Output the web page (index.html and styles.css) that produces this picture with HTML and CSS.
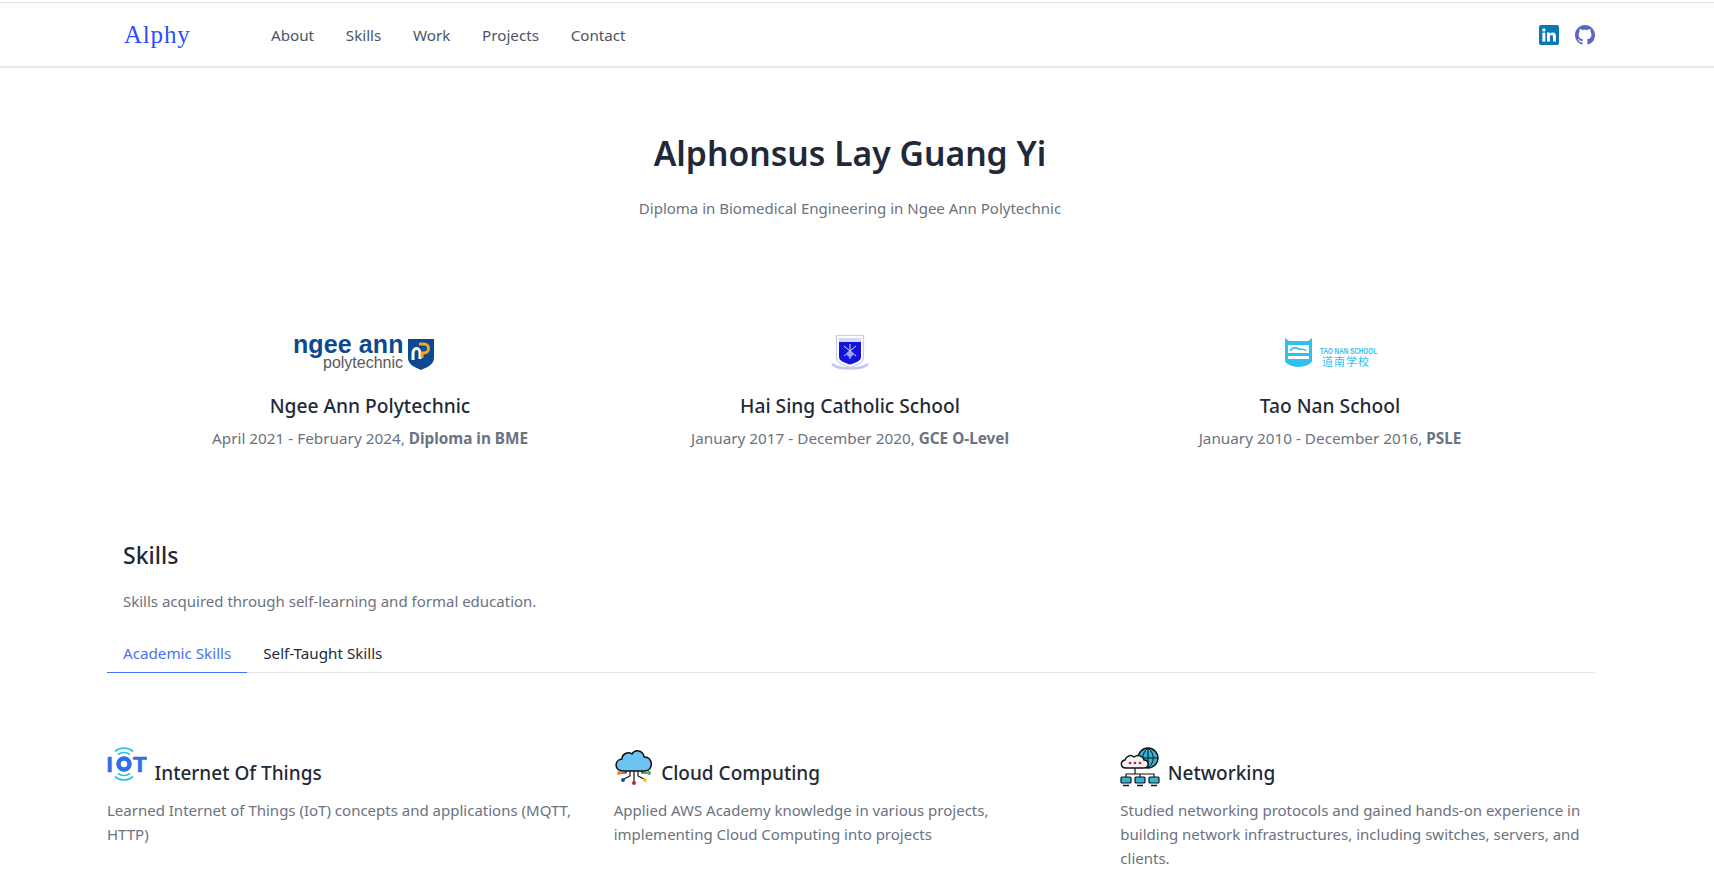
FILE: index.html
```html
<!DOCTYPE html>
<html lang="en">
<head>
<meta charset="utf-8">
<title>Alphy</title>
<link rel="stylesheet" href="styles.css">
</head>
<body>
<header class="topbar">
  <nav class="nav">
    <a class="brand" href="#">Alphy</a>
    <ul class="menu">
      <li><a href="#">About</a></li>
      <li><a href="#">Skills</a></li>
      <li><a href="#">Work</a></li>
      <li><a href="#">Projects</a></li>
      <li><a href="#">Contact</a></li>
    </ul>
    <div class="socials">
      <svg class="social" viewBox="0 0 20 20" aria-label="LinkedIn"><rect width="20" height="20" rx="2" fill="#0a78b5"/><rect x="3.4" y="7.6" width="2.9" height="9" fill="#fff"/><circle cx="4.85" cy="4.9" r="1.65" fill="#fff"/><path d="M8 7.6h2.8v1.3c.5-.9 1.6-1.5 2.9-1.5 2.4 0 3.2 1.5 3.2 4v5.2h-2.9v-4.6c0-1.2-.3-2.1-1.4-2.1-1.2 0-1.7.9-1.7 2.1v4.6H8z" fill="#fff"/></svg>
      <svg class="social" viewBox="0 0 16 16" aria-label="GitHub"><path fill="#5a67c8" d="M8 0C3.58 0 0 3.58 0 8c0 3.54 2.29 6.53 5.47 7.59.4.07.55-.17.55-.38 0-.19-.01-.82-.01-1.49-2.01.37-2.53-.49-2.69-.94-.09-.23-.48-.94-.82-1.13-.28-.15-.68-.52-.01-.53.63-.01 1.08.58 1.23.82.72 1.21 1.87.87 2.33.66.07-.52.28-.87.51-1.07-1.78-.2-3.64-.89-3.64-3.95 0-.87.31-1.59.82-2.15-.08-.2-.36-1.02.08-2.12 0 0 .67-.21 2.2.82.64-.18 1.32-.27 2-.27s1.36.09 2 .27c1.53-1.04 2.2-.82 2.2-.82.44 1.1.16 1.92.08 2.12.51.56.82 1.27.82 2.15 0 3.07-1.87 3.75-3.65 3.95.29.25.54.73.54 1.48 0 1.07-.01 1.93-.01 2.2 0 .21.15.46.55.38A8.01 8.01 0 0 0 16 8c0-4.42-3.58-8-8-8z"/></svg>
    </div>
  </nav>
</header>

<main class="page">
  <section class="hero">
    <h1 class="hero-title">Alphonsus Lay Guang Yi</h1>
    <p class="hero-sub">Diploma in Biomedical Engineering in Ngee Ann Polytechnic</p>
  </section>

  <section class="schools">
    <article class="school">
      <svg class="school-logo" viewBox="0 -4 160 44" aria-label="Ngee Ann Polytechnic">
        <text class="np-main" x="3" y="19">ngee ann</text>
        <text class="np-sub" x="33" y="34">polytechnic</text>
        <path d="M118 5h26v19c0 6-6 9-13 12-7-3-13-6-13-12z" fill="#0b4a8f"/>
        <path d="M123 26v-7c0-6 7-6 7 0v6" fill="none" stroke="#fff" stroke-width="3"/>
        <path d="M129 10h5c6 0 6 9 0 9h-2v5" fill="none" stroke="#f5a623" stroke-width="3"/>
      </svg>
      <h3 class="school-name">Ngee Ann Polytechnic</h3>
      <p class="school-info">April 2021 - February 2024, <strong>Diploma in BME</strong></p>
    </article>
    <article class="school">
      <svg class="school-logo" viewBox="0 -4 160 44" aria-label="Hai Sing Catholic School">
        <path d="M66.500 1.500h27v23c0 4-7 7-13.500 9-6.500-2-13.500-5-13.500-9z" fill="#fff" stroke="#c9cdf2" stroke-width="1.200"/>
        <rect x="69" y="4" width="22" height="4" fill="#d5d7f8"/>
        <path d="M69 8h22v15c0 4-6 6-11 7.500-5-1.500-11-3.500-11-7.500z" fill="#1414e0"/>
        <path d="M80 10v15M74 12l12 10M86 12l-12 10" stroke="#dfe0ff" stroke-width="1"/>
        <circle cx="80" cy="20" r="3" fill="#9fa3f5"/>
        <path d="M62 30c6 6 30 6 36 0" fill="none" stroke="#c4c8f0" stroke-width="2.500"/>
      </svg>
      <h3 class="school-name">Hai Sing Catholic School</h3>
      <p class="school-info">January 2017 - December 2020, <strong>GCE O-Level</strong></p>
    </article>
    <article class="school">
      <svg class="school-logo" viewBox="0 -4 160 44" aria-label="Tao Nan School">
        <path d="M35 4l4 3h19l4-3v23c0 3-7 5-13.500 7-6.500-2-13.500-4-13.500-7z" fill="#2fc0ee"/>
        <rect x="38" y="11" width="21" height="8" fill="#fff"/>
        <path d="M40 17c3-5 7-3 9-2s5-1 7 2" fill="none" stroke="#2fc0ee" stroke-width="1.500"/>
        <rect x="38" y="22" width="21" height="3" fill="#fff"/>
        <path d="M36 30c6 5 19 5 25 0" fill="none" stroke="#fff" stroke-width="1.500"/>
        <text class="tn-main" x="70" y="20" textLength="57" lengthAdjust="spacingAndGlyphs">TAO NAN SCHOOL</text>
        <text class="tn-sub" x="72" y="32">道南学校</text>
      </svg>
      <h3 class="school-name">Tao Nan School</h3>
      <p class="school-info">January 2010 - December 2016, <strong>PSLE</strong></p>
    </article>
  </section>

  <section class="skills">
    <h2 class="skills-title">Skills</h2>
    <p class="skills-desc">Skills acquired through self-learning and formal education.</p>
    <div class="tabs">
      <button class="tab tab-active">Academic Skills</button>
      <button class="tab">Self-Taught Skills</button>
    </div>
    <div class="skill-grid">
      <article class="skill">
        <h3 class="skill-head">
          <svg class="skill-icon" viewBox="0 0 40 40">
            <text class="iot-letter" x="-0.500" y="25">I</text>
            <circle cx="17" cy="17" r="5.500" fill="none" stroke="#2f6fe8" stroke-width="4.500"/>
            <text class="iot-letter" x="26" y="25">T</text>
            <path d="M8 4.500c5-4.500 13-4.500 18 0M11 7.500c3.500-2.500 8.500-2.500 12 0M8 29.500c5 4.500 13 4.500 18 0M11 26.500c3.500 2.500 8.500 2.500 12 0" fill="none" stroke="#2cc6dc" stroke-width="1.800"/>
          </svg>
          Internet Of Things
        </h3>
        <p class="skill-text">Learned Internet of Things (IoT) concepts and applications (MQTT, HTTP)</p>
      </article>
      <article class="skill">
        <h3 class="skill-head">
          <svg class="skill-icon" viewBox="0 0 40 40">
            <path d="M9 24c-9 0-9-11-1-12 0-5 6-8 10-5 3-5 11-4 12 3 9-1 10 14 1 14z" fill="#6cc4f2" stroke="#111" stroke-width="1.500" stroke-linejoin="round"/>
            <path d="M20 24v11M16 24v5l-6 3M24 24v5l6 3M12 24v2H7M28 24v2h5" fill="none" stroke="#111" stroke-width="1.200"/>
            <circle cx="20" cy="36" r="2" fill="#c8202a"/>
            <circle cx="9" cy="33" r="2" fill="#234a8f"/>
            <circle cx="31" cy="33" r="2" fill="#e8c52a"/>
            <circle cx="5" cy="26" r="2" fill="#e88a2a"/>
            <circle cx="35" cy="26" r="2" fill="#3fae6a"/>
          </svg>
          Cloud Computing
        </h3>
        <p class="skill-text">Applied AWS Academy knowledge in various projects, implementing Cloud Computing into projects</p>
      </article>
      <article class="skill">
        <h3 class="skill-head">
          <svg class="skill-icon" viewBox="0 0 40 40">
            <circle cx="28" cy="11" r="10" fill="#35b3d6" stroke="#111" stroke-width="1.400"/>
            <path d="M18 11h20M28 1v20M28 1c-7 6-7 14 0 20M28 1c7 6 7 14 0 20" fill="none" stroke="#111" stroke-width="1"/>
            <path d="M6 21c-6 0-6-7-1-8 1-4 6-6 9-3 4-3 9-1 10 3 5 0 6 8 0 8z" fill="#f1f1f1" stroke="#111" stroke-width="1.400"/>
            <circle cx="10" cy="16" r="1.300" fill="#c8202a"/><circle cx="15" cy="16" r="1.300" fill="#c8202a"/><circle cx="20" cy="16" r="1.300" fill="#c8202a"/>
            <path d="M15 21v6M6 30v-3h28v3M20 27v3" fill="none" stroke="#111" stroke-width="1.200"/>
            <rect x="1" y="30" width="10" height="6" rx="1" fill="#35b3d6" stroke="#111" stroke-width="1.200"/>
            <rect x="15" y="30" width="10" height="6" rx="1" fill="#35b3d6" stroke="#111" stroke-width="1.200"/>
            <rect x="29" y="30" width="10" height="6" rx="1" fill="#35b3d6" stroke="#111" stroke-width="1.200"/>
            <path d="M3 38.500h6M17 38.500h6M31 38.500h6" stroke="#111" stroke-width="1.400"/>
          </svg>
          Networking
        </h3>
        <p class="skill-text">Studied networking protocols and gained hands-on experience in building network infrastructures, including switches, servers, and clients.</p>
      </article>
    </div>
  </section>
</main>
</body>
</html>
```
FILE: styles.css
```css
* { box-sizing: border-box; }
html, body { margin: 0; padding: 0; height: 875px; overflow: hidden; }
body {
  background: #fff;
  color: #1f2937;
  font-family: "Noto Sans", sans-serif;
  font-size: 15px;
  line-height: 24px;
}
a { color: inherit; text-decoration: none; }
p, h1, h2, h3, ul { margin: 0; padding: 0; }

.topbar {
  margin-top: 2px;
  height: 66px;
  border-top: 1px solid #e2e3e6;
  border-bottom: 2px solid #e9eaec;
}
.nav {
  width: 1488px;
  margin-left: 107px;
  height: 63px;
  display: flex;
  align-items: center;
}
.brand {
  width: 164px;
  padding-left: 17px;
  color: #2b4dff;
  font-family: "Liberation Serif", serif;
  font-size: 25px;
  letter-spacing: 0.8px;
}
.menu { list-style: none; display: flex; gap: 31.700px; color: #4b5563; font-size: 15.200px; }
.socials { margin-left: auto; display: flex; gap: 16px; align-items: center; }
.social { width: 20px; height: 20px; display: block; }

.page { width: 1700px; }
.hero { padding-top: 61px; text-align: center; }
.hero-title { font-size: 33.700px; line-height: 48px; font-weight: 600; color: #1f2937; }
.hero-sub { margin-top: 19px; color: #6b7280; }

.schools {
  width: 1440px;
  margin: 110px auto 0;
  display: grid;
  grid-template-columns: repeat(3, 1fr);
  text-align: center;
}
.school-logo { display: block; width: 160px; height: 44px; margin: 0 auto; }
.school-name { margin-top: 18px; font-size: 19.200px; line-height: 28px; font-weight: 500; color: #1f2937; }
.school-info { margin-top: 6px; color: #6b7280; font-size: 15.300px; }
.school-info strong { font-weight: 700; color: #6b7280; }

.np-main { font-family: "Liberation Sans", sans-serif; font-weight: 700; font-size: 25px; fill: #0b4a8f; letter-spacing: 0.1px; }
.np-sub { font-family: "Liberation Sans", sans-serif; font-size: 16px; fill: #5a5a5a; }
.tn-main { font-family: "Liberation Sans", sans-serif; font-weight: 700; font-size: 9px; fill: #2fc0ee; }
.tn-sub { font-family: "Noto Sans CJK SC", sans-serif; font-size: 11px; fill: #2fc0ee; letter-spacing: 1px; }

.skills { width: 1488px; margin: 0 0 0 107px; padding-top: 89px; }
.skills-title { padding-left: 16px; font-size: 23px; line-height: 32px; font-weight: 500; color: #1f2937; }
.skills-desc { margin-top: 18px; padding-left: 16px; color: #6b7280; }
.tabs { margin-top: 20px; display: flex; border-bottom: 1px solid #e5e7eb; height: 40px; }
.tab {
  padding: 0 16px;
  height: 40px;
  background: none;
  border: 0;
  border-bottom: 1px solid transparent;
  font: inherit;
  font-size: 15.200px;
  color: #1f2937;
}
.tab-active { color: #4a72f5; border-bottom-color: #4a72f5; }

.skill-grid {
  margin-top: 74px;
  display: grid;
  grid-template-columns: repeat(3, 1fr);
  gap: 32px;
}
.skill-head { display: flex; align-items: flex-end; gap: 7.500px; font-size: 19px; line-height: 28px; font-weight: 500; color: #1f2937; }
.skill-icon { width: 40px; height: 40px; display: block; flex: none; }
.skill-text { margin-top: 11px; color: #6b7280; }
.iot-letter { font-family: "Liberation Sans", sans-serif; font-weight: 700; font-size: 22.500px; fill: #2f6fe8; stroke: #2f6fe8; stroke-width: 0.600px; }
```
